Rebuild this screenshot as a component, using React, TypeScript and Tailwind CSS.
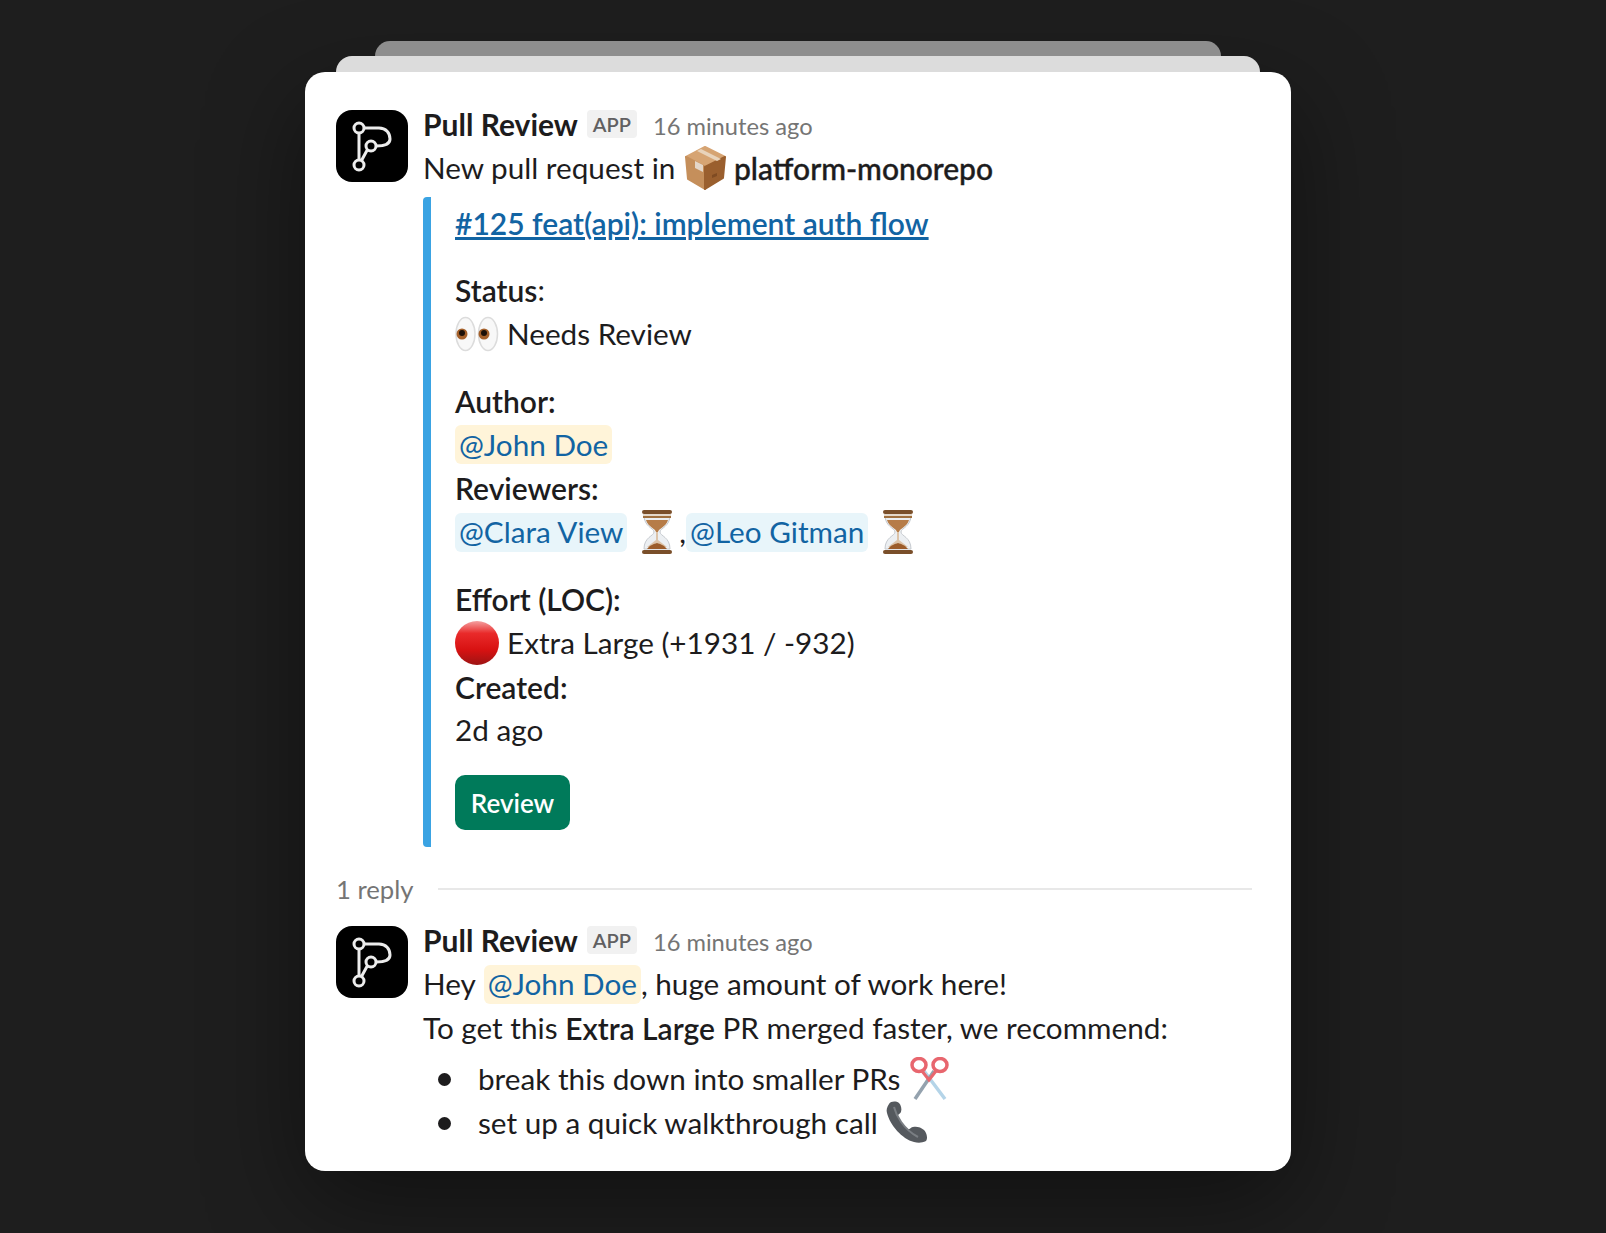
import React from "react";

const LATO = "font-['Lato',sans-serif]";

const Logo = () => (
  <div className="w-[72px] h-[72px] shrink-0 rounded-[16px] bg-black mt-[8px]">
    <svg width="72" height="72" viewBox="0 0 72 72" fill="none" stroke="#ececec" strokeWidth="3">
      <circle cx="23" cy="18" r="5" />
      <circle cx="35" cy="36" r="5" />
      <circle cx="23" cy="55" r="5" />
      <path d="M28 18h15c7 0 11 5 11 11 0 5-5 7-14 7" />
      <path d="M23 23v27M25.500 50.500l6-11" />
    </svg>
  </div>
);

const BoxEmoji = () => (
  <svg width="44" height="46" viewBox="0 0 44 46" className="shrink-0">
    <g strokeLinejoin="round" strokeWidth="2">
      <path d="M21 2 2 12l19 10 20-10z" fill="#d6a473" stroke="#d6a473" />
      <path d="M2 12l19 10v22L4 34z" fill="#c58f5b" stroke="#c58f5b" />
      <path d="M21 22 41 12l-2 21-18 11z" fill="#9a5f2e" stroke="#9a5f2e" />
    </g>
    <path d="M13 6l20 10 4-2L17 4z" fill="#e8d3bb" />
    <path d="M11 16l8 4v7l-8-4z" fill="#e4d6c8" />
    <path d="M28 30l5-2v3l-5 2z" fill="#7f4b22" />
  </svg>
);

const EyesEmoji = () => (
  <svg width="44" height="44" viewBox="0 0 44 44" className="shrink-0">
    <ellipse cx="10.500" cy="22" rx="9.500" ry="16.500" fill="#f8f8f8" stroke="#dcdcdc" strokeWidth="1.500" />
    <ellipse cx="33" cy="22" rx="9.500" ry="16.500" fill="#f8f8f8" stroke="#dcdcdc" strokeWidth="1.500" />
    <circle cx="7" cy="22" r="5.500" fill="#a4602a" />
    <circle cx="7" cy="21" r="3" fill="#1c1008" />
    <circle cx="29" cy="22" r="5.500" fill="#a4602a" />
    <circle cx="29" cy="21" r="3" fill="#1c1008" />
  </svg>
);

const HourglassEmoji = () => (
  <svg width="44" height="44" viewBox="0 0 44 44" className="shrink-0">
    <path d="M9 5c0 12 10 13 10 17S9 27 9 39h26c0-12-10-13-10-17s10-5 10-17z" fill="#eceff2" stroke="#c6cacf" strokeWidth="1" />
    <path d="M11 10c2 7 10 9 10 12h2c0-3 8-5 10-12z" fill="#b67c48" />
    <path d="M21 22h2v8l9 7H12l9-7z" fill="#dcc4aa" />
    <path d="M12 39c3-4 7-5 10-6 3 1 7 2 10 6z" fill="#9c5c2a" />
    <rect x="7" y="0" width="30" height="4" rx="2" fill="#7a4f2a" />
    <rect x="8" y="4" width="28" height="2" fill="#e4d8ca" />
    <rect x="8" y="6" width="28" height="2" fill="#a0703f" />
    <rect x="7" y="40" width="30" height="4" rx="2" fill="#7a4f2a" />
  </svg>
);

const RedCircleEmoji = () => (
  <svg width="44" height="44" viewBox="0 0 44 44" className="shrink-0">
    <defs>
      <linearGradient id="red-ball" x1="0" y1="0" x2="0" y2="1">
        <stop offset="0" stopColor="#f4a0a0" />
        <stop offset="0.28" stopColor="#e92a2a" />
        <stop offset="0.65" stopColor="#d81212" />
        <stop offset="1" stopColor="#9d1414" />
      </linearGradient>
    </defs>
    <circle cx="22" cy="22" r="22" fill="url(#red-ball)" />
  </svg>
);

const ScissorsEmoji = () => (
  <svg width="42" height="44" viewBox="0 0 42 44" className="shrink-0" fill="none">
    <path d="M37 42 16 14" stroke="#b4d4e8" strokeWidth="3.500" />
    <path d="M7 42 26 14" stroke="#94a2ae" strokeWidth="3.500" />
    <ellipse cx="11" cy="8" rx="7" ry="6.500" stroke="#e8666e" strokeWidth="3.500" />
    <ellipse cx="32" cy="8" rx="7" ry="6.500" stroke="#e8666e" strokeWidth="3.500" />
    <path d="M14 14l7 9 7-9" stroke="#e8666e" strokeWidth="3" />
  </svg>
);

const PhoneEmoji = () => (
  <svg width="46" height="44" viewBox="0 0 44 44" className="shrink-0">
    <path
      d="M3 3c2-3 7-3 10-1 2 2 3 6 2 9-1 2-3 2-3 4 1 4 6 10 10 13 2 1 3-2 5-2 3-1 8 0 11 3 3 3 4 9 2 11-4 2-8 2-12 1C16 38 4 24 1 12c-1-3 0-6 2-9z"
      fill="#55595e"
    />
    <path d="M8 6c2 8 9 22 24 30" stroke="#7a7e83" strokeWidth="2" fill="none" />
  </svg>
);

const Mention = ({ name, self }: { name: string; self?: boolean }) => (
  <span
    className={`inline-flex items-center h-[39px] px-[4px] rounded-[6px] text-[#1264a3] ${
      self ? "bg-[#fff4d9]" : "bg-[#e8f5fa]"
    }`}
  >
    {name}
  </span>
);

const Line = ({
  children,
  className = "",
  height = "h-[44px]",
}: {
  children: React.ReactNode;
  className?: string;
  height?: string;
}) => <div className={`flex items-center whitespace-pre ${height} ${className}`}>{children}</div>;

const Header = () => (
  <div className="flex items-center h-[44px] text-[30px]">
    <span className="font-bold text-[#1d1c1d]">Pull Review</span>
    <span className="ml-[9px] flex items-center justify-center w-[50px] h-[28px] rounded-[4px] bg-[#f1f1f1] text-[20px] font-semibold text-[#616061]">
      APP
    </span>
    <span className="ml-[16px] mt-[4px] text-[23.700px] text-[#757575]">16 minutes ago</span>
  </div>
);

export default function App() {
  return (
    <div className={`min-h-screen bg-[#1e1e1e] pt-[41px] pr-[10px] flex flex-col items-center ${LATO} text-[29.700px] leading-[44px] text-[#1d1c1d]`}>
      <div className="relative z-10 w-[846px] h-[15px] rounded-t-[20px] bg-[#8e8e8e]" />
      <div className="relative z-10 w-[924px] h-[16px] rounded-t-[20px] bg-[#dcdcdc]" />
      <div className="w-[986px] h-[1099px] rounded-[20px] bg-white pt-[30px] pl-[31px] pr-[39px] shadow-[0_30px_100px_rgba(0,0,0,0.45)]">
        <div className="flex gap-[15px]">
          <Logo />
          <div className="flex-1">
            <Header />
            <Line>
              New pull request in{" "}
              <span className="ml-[1px] mr-[8px]"><BoxEmoji /></span>
              <span className="text-[30px] font-medium [-webkit-text-stroke:0.4px_#1d1c1d] -ml-[2px]">platform-monorepo</span>
            </Line>
            <div className="mt-[7px] h-[650px] w-full border-l-[8px] border-[#3aa3e3] rounded-[4px] pl-[24px] pt-[4px]">
              <Line className="text-[30px] font-semibold text-[#1264a3] underline">#125 feat(api): implement auth flow</Line>
              <Line className="mt-[23px]"><span className="text-[30px] font-semibold">Status</span>:</Line>
              <Line><EyesEmoji /><span className="ml-[8px]">Needs Review</span></Line>
              <Line className="mt-[23px] text-[30px] font-semibold">Author:</Line>
              <Line height="h-[43px]"><Mention name="@John Doe" self /></Line>
              <Line className="text-[30px] font-semibold">Reviewers:</Line>
              <Line>
                <Mention name="@Clara View" />
                <span className="ml-[8px]"><HourglassEmoji /></span>
                <span>,</span>
                <Mention name="@Leo Gitman" />
                <span className="ml-[8px]"><HourglassEmoji /></span>
              </Line>
              <Line className="mt-[23px] text-[30px] font-semibold">Effort (LOC):</Line>
              <Line><RedCircleEmoji /><span className="ml-[8px]">Extra Large (+1931 / -932)</span></Line>
              <Line height="h-[43px]" className="text-[30px] font-semibold">Created:</Line>
              <Line>2d ago</Line>
              <button className="mt-[23px] w-[115px] h-[55px] rounded-[10px] bg-[#007a5a] text-white text-[26px] font-semibold">
                Review
              </button>
            </div>
          </div>
        </div>

        <div className="flex items-center h-[44px] mt-[20px] text-[25.700px] text-[#757575]">
          <span>1 reply</span>
          <div className="ml-[24px] flex-1 h-[2px] bg-[#e8e8e8]" />
        </div>

        <div className="flex gap-[15px] mt-[7px]">
          <Logo />
          <div className="flex-1">
            <Header />
            <Line>
              Hey <span className="ml-[1px]"><Mention name="@John Doe" self /></span>, huge amount of work here!
            </Line>
            <Line>
              To get this <span className="text-[30px] font-semibold">Extra Large</span> PR merged faster, we recommend:
            </Line>
            <div className="mt-[7px]">
              <Line>
                <span className="ml-[15px] w-[13px] h-[13px] rounded-full bg-[#1d1c1d]" />
                <span className="ml-[27px]">break this down into smaller PRs</span>
                <span className="ml-[8px]"><ScissorsEmoji /></span>
              </Line>
              <Line>
                <span className="ml-[15px] w-[13px] h-[13px] rounded-full bg-[#1d1c1d]" />
                <span className="ml-[27px]">set up a quick walkthrough call</span>
                <span className="ml-[7px]"><PhoneEmoji /></span>
              </Line>
            </div>
          </div>
        </div>
      </div>
    </div>
  );
}
